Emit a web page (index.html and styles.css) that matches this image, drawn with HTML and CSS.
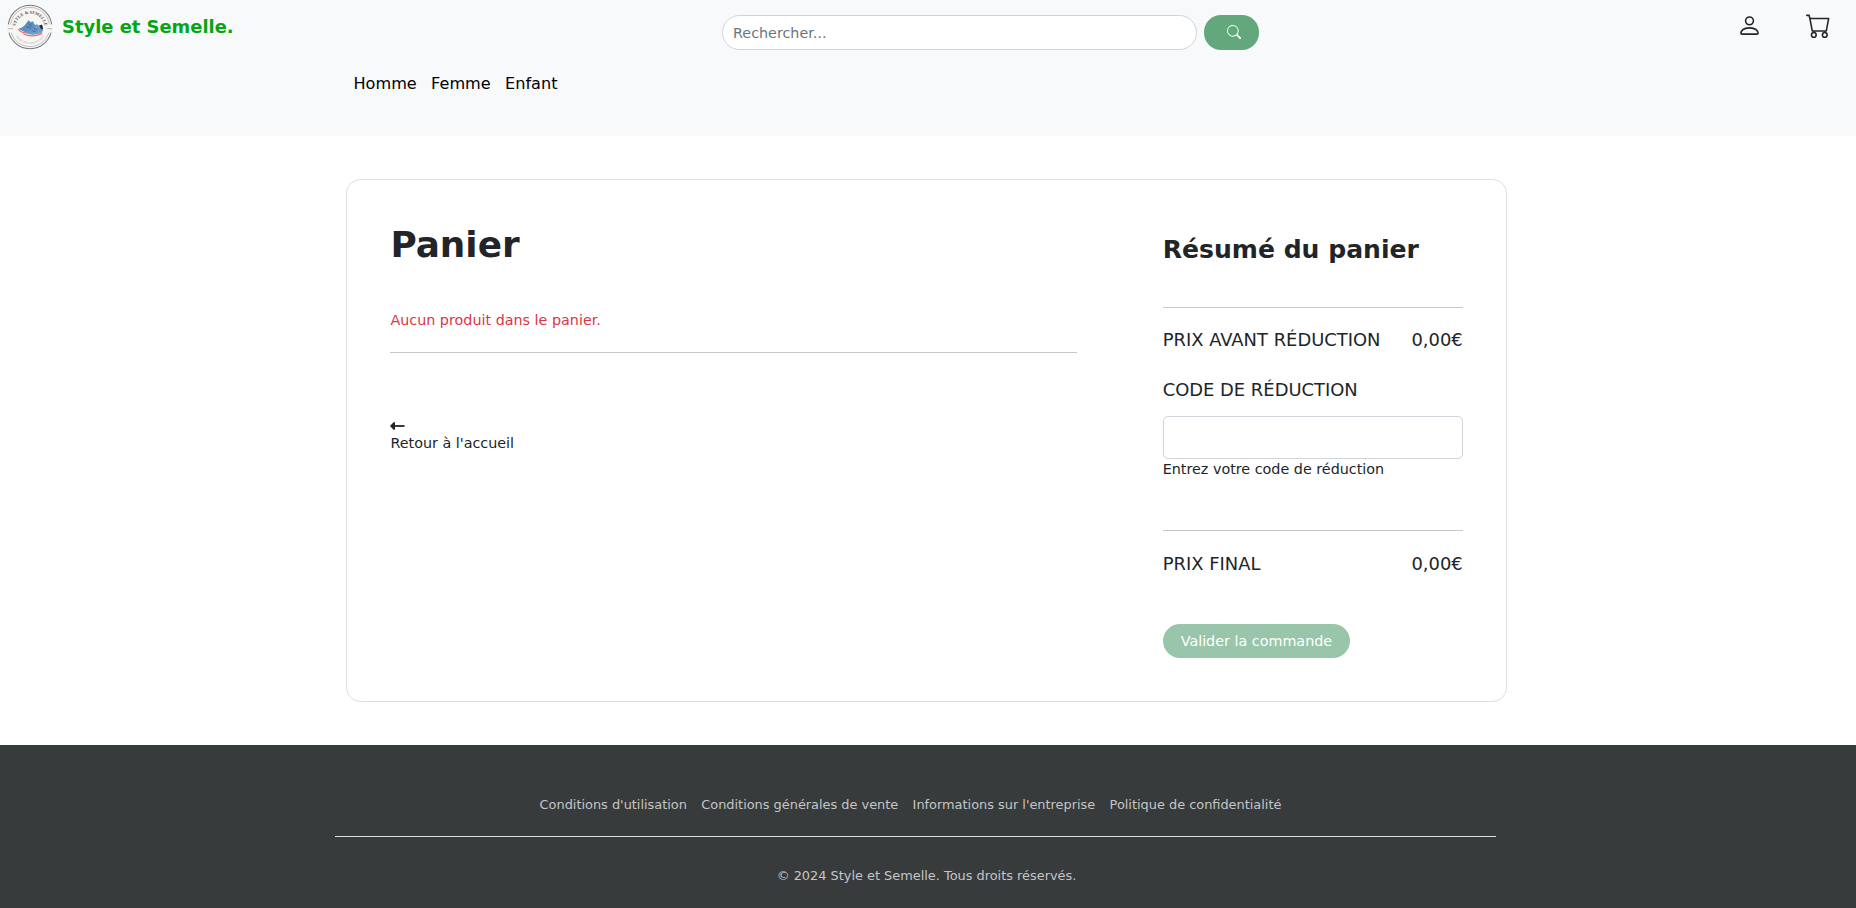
FILE: index.html
```html
<!DOCTYPE html>
<html lang="fr">
<head>
<meta charset="utf-8">
<title>Panier - Style et Semelle</title>
<link rel="stylesheet" href="styles.css">
</head>
<body>
<header class="header">
  <div class="topbar">
    <a class="brand">
      <svg class="logo" viewBox="0 0 45 45" aria-hidden="true">
        <circle cx="22.5" cy="22.5" r="21.3" fill="#f7f6f3" stroke="#77787c" stroke-width="1"/>
        <circle cx="22.5" cy="22.5" r="19.2" fill="none" stroke="#a9a9ab" stroke-width=".7"/>
        <rect x="0" y="20" width="45" height="8" fill="#f7f6f3"/>
        <path d="M1 24h5M39 24h5" stroke="#c4c4c4" stroke-width="1.2"/>
        <path id="arcTop" d="M8 24a14.500 14.500 0 0 1 29 0" fill="none"/>
        <path id="arcBottom" d="M6.5 27a16.600 16.600 0 0 0 32 0" fill="none"/>
        <text class="logo-top"><textPath href="#arcTop" startOffset="50%" text-anchor="middle">STYLE &amp; SEMELLE</textPath></text>
        <text class="logo-bottom"><textPath href="#arcBottom" startOffset="50%" text-anchor="middle">POUR VOS CHAUSSURES</textPath></text>
        <path d="M11.500 23.500c2.500 0 4.500-1 6-3l3.500-4.500 2 1.500 2.500-.5 1.500 3 5 3-12 5c-3.500-.5-7-2-8.500-4.500z" fill="#5d8fc4"/>
        <path d="M16.500 27.500c4 0 7-1.500 9.500-4.500l3-3.500 2 1.500 3-.5c1.500 2.500 1.500 5 .5 7.500-5 2.500-13 3.500-18-.5z" fill="#6f9dcc"/>
        <path d="M31.500 21l2.800-1 1 4.500-1.800.5z" fill="#252a3c"/>
        <path d="M18.500 22l5 1.500M20.500 19l4 2.500M24 26l4 1M26 23.500l4 2" stroke="#3b679c" stroke-width=".9"/>
        <path d="M11 24.500c2 2.500 4 3.500 6.500 3.500M16 29c5 3 12 2.500 18.500 0" fill="none" stroke="#ef6b67" stroke-width="1.100"/>
      </svg>
      <span class="brand-name">Style et Semelle.</span>
    </a>
    <form class="search">
      <input class="search-input" type="text" placeholder="Rechercher...">
      <button class="search-button" type="button" aria-label="Rechercher">
        <svg class="search-icon" viewBox="0 0 16 16" fill="currentColor"><path d="M11.742 10.344a6.500 6.500 0 1 0-1.397 1.398h-.001c.03.04.062.078.098.115l3.850 3.850a1 1 0 0 0 1.415-1.414l-3.850-3.850a1.007 1.007 0 0 0-.115-.1zM12 6.500a5.500 5.500 0 1 1-11 0 5.500 5.500 0 0 1 11 0z"/></svg>
      </button>
    </form>
    <div class="actions">
      <svg class="action-icon" viewBox="0 0 16 16" fill="currentColor"><path d="M8 8a3 3 0 1 0 0-6 3 3 0 0 0 0 6zm2-3a2 2 0 1 1-4 0 2 2 0 0 1 4 0zm4 8c0 1-1 1-1 1H3s-1 0-1-1 1-4 6-4 6 3 6 4zm-1-.004c-.001-.246-.154-.986-.832-1.664C11.516 10.680 10.289 10 8 10c-2.290 0-3.516.680-4.168 1.332-.678.678-.830 1.418-.832 1.664h10z"/></svg>
      <svg class="action-icon" viewBox="0 0 16 16" fill="currentColor"><path d="M0 1.500A.5.5 0 0 1 .5 1H2a.5.5 0 0 1 .485.379L2.890 3H14.500a.5.5 0 0 1 .491.592l-1.500 8A.5.5 0 0 1 13 12H4a.5.5 0 0 1-.491-.408L2.010 3.607 1.610 2H.5a.5.5 0 0 1-.5-.5zM3.102 4l1.313 7h8.170l1.313-7H3.102zM5 12a2 2 0 1 0 0 4 2 2 0 0 0 0-4zm7 0a2 2 0 1 0 0 4 2 2 0 0 0 0-4zm-7 1a1 1 0 1 1 0 2 1 1 0 0 1 0-2zm7 0a1 1 0 1 1 0 2 1 1 0 0 1 0-2z"/></svg>
    </div>
  </div>
  <nav class="categories"><a>Homme</a><a>Femme</a><a>Enfant</a></nav>
</header>
<main class="card">
  <section class="cart">
    <h1 class="cart-title">Panier</h1>
    <p class="cart-empty">Aucun produit dans le panier.</p>
    <hr class="rule">
    <a class="back">
      <svg class="back-arrow" viewBox="0 0 15 8"><path d="M4 4h10.500" stroke="currentColor" stroke-width="1.800"/><path d="M0 4l3.500-3.800h1.500v7.600h-1.500z" fill="currentColor"/></svg>
      <span>Retour à l'accueil</span>
    </a>
  </section>
  <section class="summary">
    <h2 class="summary-title">Résumé du panier</h2>
    <hr class="rule">
    <div class="price-row before"><span>PRIX AVANT RÉDUCTION</span><span>0,00€</span></div>
    <label class="code-label" for="code">CODE DE RÉDUCTION</label>
    <input class="code-input" id="code" type="text">
    <div class="code-help">Entrez votre code de réduction</div>
    <hr class="rule">
    <div class="price-row final"><span>PRIX FINAL</span><span>0,00€</span></div>
    <button class="submit" type="button" disabled>Valider la commande</button>
  </section>
</main>
<footer class="footer">
  <nav class="footer-links"><a>Conditions d'utilisation</a><a>Conditions générales de vente</a><a>Informations sur l'entreprise</a><a>Politique de confidentialité</a></nav>
  <p class="copyright">© 2024 Style et Semelle. Tous droits réservés.</p>
</footer>
</body>
</html>
```
FILE: styles.css
```css
* { box-sizing: border-box; }
html { font-size: 14.336px; }
body {
  margin: 0;
  min-height: 100vh;
  display: flex;
  flex-direction: column;
  font-family: "DejaVu Sans", sans-serif;
  font-size: 1rem;
  line-height: 1.5;
  color: #212529;
  background: #fff;
}
h1, h2, p { margin: 0; }
input, button { font: inherit; }
svg { display: block; flex: none; }

.header { height: 136px; background: #f8f9fb; }
.topbar {
  display: grid;
  grid-template-columns: 722px 538px 1fr;
  height: 65px;
  align-items: start;
}
.brand { display: flex; align-items: flex-start; gap: 9px; padding: 4px 0 0 7px; }
.logo { width: 46px; height: 46px; }
.logo-top { font: 700 4.300px "Liberation Serif", serif; fill: #55565b; }
.logo-bottom { font: 2.600px "Liberation Sans", sans-serif; fill: #aaa; }
.brand-name { padding-top: 10px; font-size: 1.250rem; font-weight: 700; color: #05a614; }
.search { display: flex; gap: 7px; padding-top: 15px; }
.search-input {
  width: 475px;
  height: 35px;
  padding: 5px 10px;
  border: 1px solid #ced4da;
  border-radius: 18px;
  background: #fff;
}
.search-input::placeholder { color: #6c757d; opacity: 1; }
.search-button {
  width: 55px;
  height: 35px;
  padding: 0 0 1px 5px;
  border: 0;
  border-radius: 17px;
  color: #fff;
  background: #63a77d;
  display: flex;
  align-items: center;
  justify-content: center;
}
.search-icon { width: 1rem; height: 1rem; }
.actions { display: flex; justify-content: flex-end; gap: 44px; padding: 13px 25px 0 0; }
.action-icon { width: 25px; height: 25px; }
.categories {
  display: flex;
  gap: 1rem;
  padding: 7px 0 0 353.500px;
  font-size: 1.125rem;
  color: #000;
}

.card {
  display: flex;
  width: 1161px;
  height: 523px;
  margin: 43px 0 43px 346px;
  border: 1px solid #dedfe0;
  border-radius: 1rem;
}
.cart { width: 773px; padding: 43px 43px 43px 43.400px; }
.summary { flex: 1; padding: 50px 43.300px 0 42.700px; }
.rule { height: 1px; margin: 0; border: 0; background: #c7c8c9; }
.cart-title { font-size: 2.500rem; line-height: 43px; }
.cart-empty { margin: 44px 0 0; height: 42px; color: #dc3545; }
.back { display: block; padding-top: 69px; }
.back-arrow { width: 15px; height: 8px; margin-bottom: 3px; }
.summary-title { font-size: 1.750rem; line-height: 40px; }
.summary-title + .rule { margin-top: 37px; }
.price-row { display: flex; justify-content: space-between; font-size: 1.250rem; line-height: 22px; }
.before { margin-top: 21px; }
.code-label { display: block; margin-top: 28px; font-size: 1.250rem; line-height: 22px; }
.code-input {
  display: block;
  width: 100%;
  height: 43px;
  margin-top: 15px;
  border: 1px solid #ced4da;
  border-radius: 5px;
  background: #fff;
}
.code-help { height: 71px; }
.final { margin-top: 22px; }
.submit {
  height: 34px;
  margin-top: 49px;
  padding: 1px 18px 0;
  border: 0;
  border-radius: 17px;
  color: #fff;
  background: #63a77d;
  opacity: .65;
}

.footer {
  flex: 1;
  padding: 48px 0 0 335px;
  font-size: .9rem;
  color: #c4c5c5;
  background: #383b3c;
}
.footer-links {
  display: flex;
  gap: 1rem;
  width: 1161px;
  height: 44px;
  padding-left: 204.600px;
  padding-top: 2px;
  border-bottom: 1px solid #dee2e6;
}
.copyright { width: 1183px; margin-top: 29px; text-align: center; }
```
